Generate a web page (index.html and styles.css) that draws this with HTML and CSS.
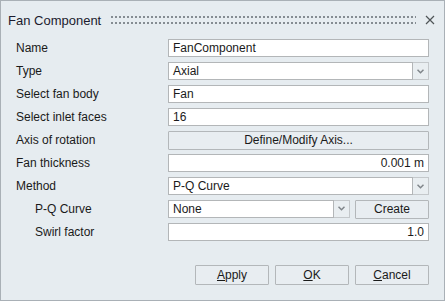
FILE: index.html
```html
<!DOCTYPE html>
<html lang="en">
<head>
  <meta charset="UTF-8" />
  <title>Fan Component</title>
  <link rel="stylesheet" href="styles.css">
</head>
<body>

  <div class="dialog">
    <div class="title-bar">
      <span class="title">Fan Component</span>
      <div class="grip"><span></span><span></span></div>
      <svg class="close" width="10" height="10" viewBox="0 0 10 10">
        <path d="M1 1 L9 9 M9 1 L1 9" stroke="#505558" stroke-width="1.2" fill="none"/>
      </svg>
    </div>

    <div class="form">
      <label>Name</label>
      <div class="field">FanComponent</div>

      <label>Type</label>
      <div class="combo">
        <div class="field">Axial</div>
        <div class="drop"><svg width="7" height="5" viewBox="0 0 7 5"><path d="M0.5 0.8 L3.5 3.8 L6.5 0.8" stroke="#80868b" stroke-width="1.5" fill="none"/></svg></div>
      </div>

      <label>Select fan body</label>
      <div class="field">Fan</div>

      <label>Select inlet faces</label>
      <div class="field">16</div>

      <label>Axis of rotation</label>
      <button class="btn">Define/Modify Axis...</button>

      <label>Fan thickness</label>
      <div class="field num">0.001 m</div>

      <label>Method</label>
      <div class="combo">
        <div class="field">P-Q Curve</div>
        <div class="drop"><svg width="7" height="5" viewBox="0 0 7 5"><path d="M0.5 0.8 L3.5 3.8 L6.5 0.8" stroke="#80868b" stroke-width="1.5" fill="none"/></svg></div>
      </div>

      <label class="sub">P-Q Curve</label>
      <div class="pair">
        <div class="combo">
          <div class="field">None</div>
          <div class="drop"><svg width="7" height="5" viewBox="0 0 7 5"><path d="M0.5 0.8 L3.5 3.8 L6.5 0.8" stroke="#80868b" stroke-width="1.5" fill="none"/></svg></div>
        </div>
        <button class="btn create">Create</button>
      </div>

      <label class="sub">Swirl factor</label>
      <div class="field num">1.0</div>
    </div>

    <div class="actions">
      <button class="btn action"><u>A</u>pply</button>
      <button class="btn action"><u>O</u>K</button>
      <button class="btn action"><u>C</u>ancel</button>
    </div>
  </div>

</body>
</html>
```

FILE: styles.css
```css
* {
  margin: 0;
  padding: 0;
  box-sizing: border-box;
}

body {
  font-family: "Liberation Sans", Arial, sans-serif;
  font-size: 12px;
  color: #1a1a1a;
  background: #e6ecf0;
}

.dialog {
  width: 445px;
  height: 301px;
  border: 1px solid #a9b0b6;
  background: #e6ecf0;
  display: flex;
  flex-direction: column;
}

.title-bar {
  height: 37px;
  display: flex;
  align-items: center;
  padding: 1px 9px 0 7px;
}

.title {
  font-size: 13px;
  color: #1b1b2e;
}

.grip {
  flex: 1;
  margin: 0 9px 0 10px;
  display: flex;
  flex-direction: column;
  gap: 4px;
}

.grip span {
  height: 2px;
  background: repeating-linear-gradient(90deg, #858c92 0 2px, transparent 2px 4px);
}

.close {
  display: block;
}

.form {
  display: grid;
  grid-template-columns: 152px 1fr;
  grid-auto-rows: 18px;
  row-gap: 5px;
  align-items: center;
  padding: 1px 15px 0 15px;
}

.form label {
  line-height: 18px;
}

.form label.sub {
  padding-left: 19px;
}

.field {
  height: 18px;
  background: #fff;
  border: 1px solid #b3b6b8;
  padding: 0 4px;
  line-height: 16px;
  white-space: nowrap;
  overflow: hidden;
}

.field.num {
  text-align: right;
}

.combo {
  display: flex;
  height: 18px;
}

.combo .field {
  flex: 1;
}

.drop {
  width: 16px;
  height: 18px;
  border: 1px solid #c4c8cb;
  border-left: none;
  background: #e9eef1;
  display: flex;
  align-items: center;
  justify-content: center;
}

.btn {
  font-family: inherit;
  font-size: 12px;
  color: #1a1a1a;
  height: 19px;
  background: #e8edf1;
  border: 1px solid #b3b7ba;
  border-radius: 1px;
}

.pair {
  display: grid;
  grid-template-columns: 1fr 74px;
  column-gap: 5px;
}

.actions {
  margin-top: auto;
  margin-bottom: 15px;
  display: flex;
  justify-content: flex-end;
  gap: 6px;
  padding-right: 15px;
}

.btn.action {
  width: 74px;
  height: 20px;
}

.btn u {
  text-underline-offset: 1px;
}
```
